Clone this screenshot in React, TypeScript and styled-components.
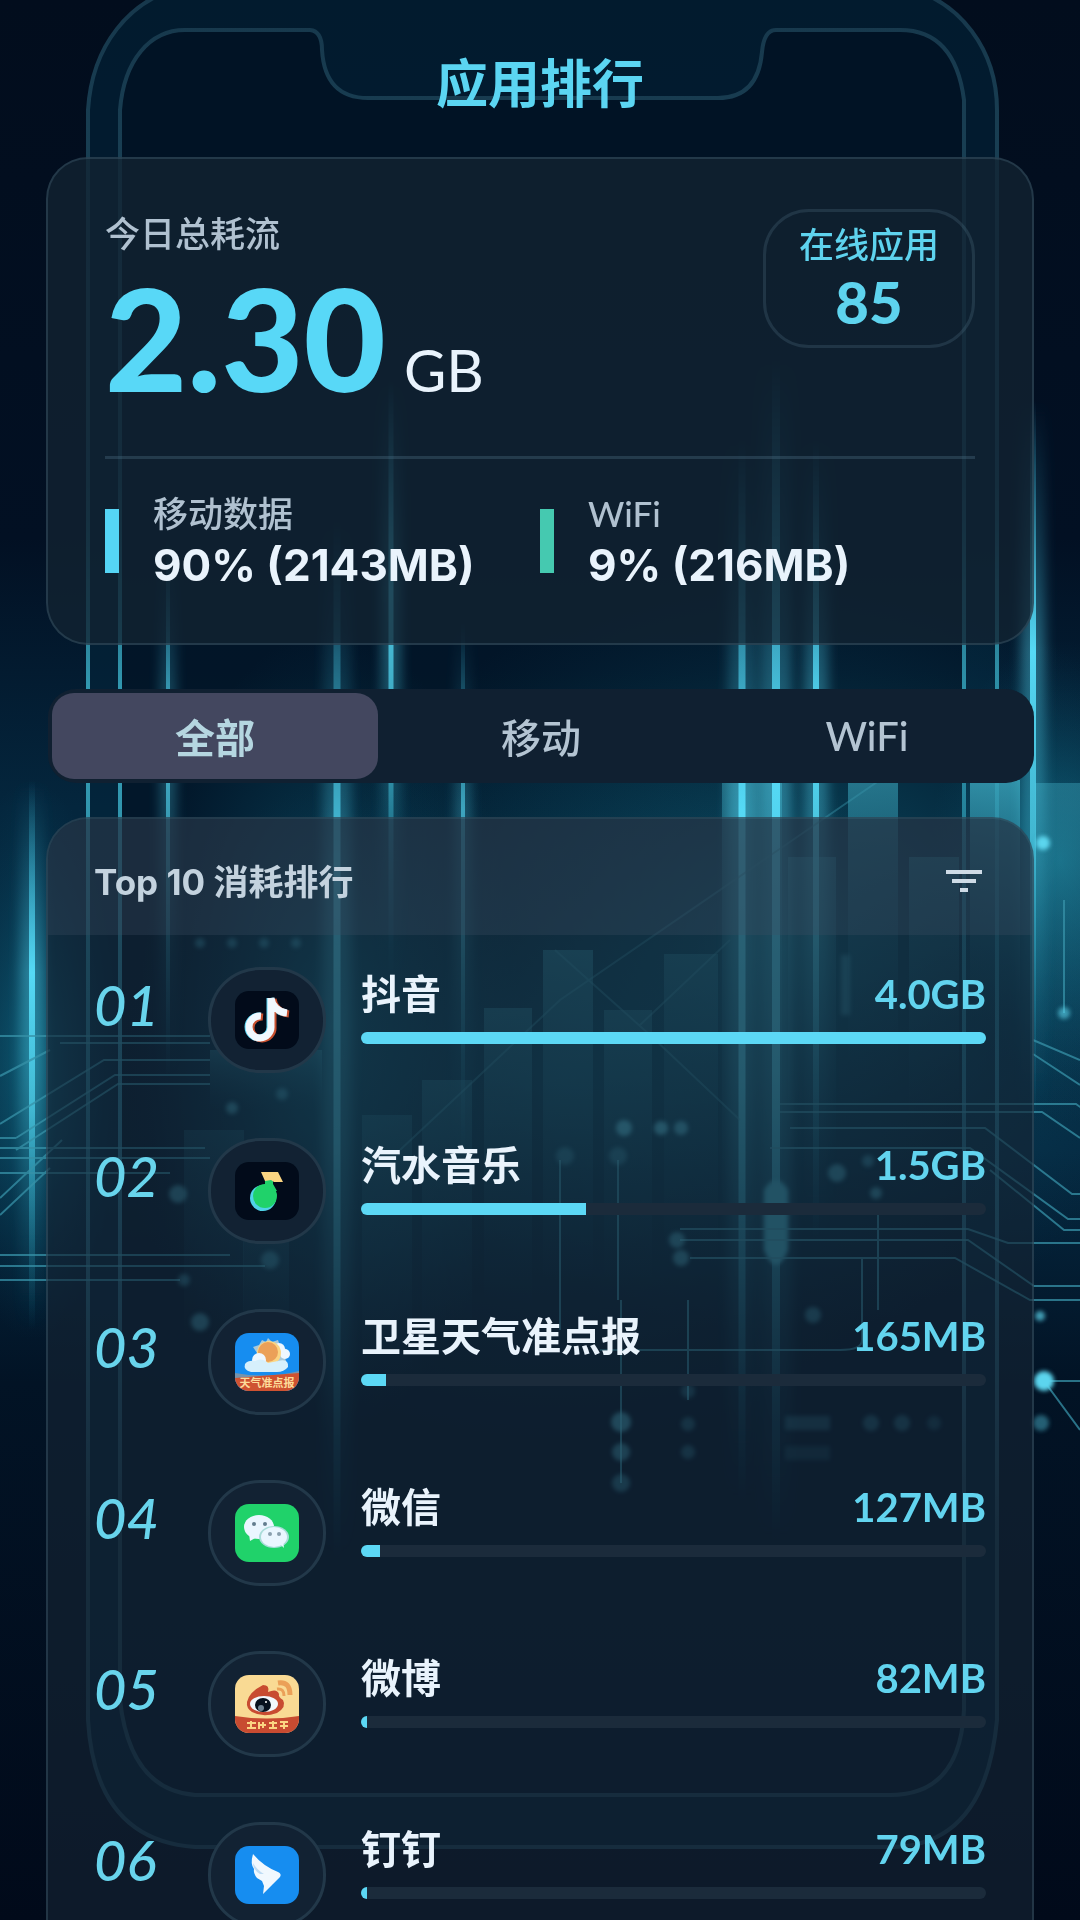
import { ReactNode } from "react";
import styled, { createGlobalStyle } from "styled-components";

const GlobalStyle = createGlobalStyle`
  * {
    box-sizing: border-box;
  }
  body {
    margin: 0;
    background: #020b1a;
    color: #e9f3fc;
    font-family: Lato, "Noto Sans CJK SC", sans-serif;
  }
  h1, h2, p, ol {
    margin: 0;
    padding: 0;
  }
`;

const Page = styled.div`
  position: relative;
  height: 100vh;
  overflow: hidden;
`;

const Scene = styled.svg`
  position: absolute;
  inset: 0;
  width: 100%;
  height: 100%;
`;

const Content = styled.main`
  position: relative;
  padding: 0 46px;
`;

const Title = styled.h1`
  padding: 47px 0 38px;
  font-size: 52px;
  line-height: 72px;
  font-weight: 700;
  text-align: center;
  color: #5bd5f2;
`;

const Card = styled.section`
  border: 2px solid rgba(90, 125, 145, 0.28);
  border-radius: 42px;
  background: rgba(18, 35, 50, 0.76);
`;

const Summary = styled(Card)`
  padding: 50px 57px;
`;

const Total = styled.div`
  display: flex;
  justify-content: space-between;
  align-items: flex-start;
`;

const Label = styled.p`
  font-size: 35px;
  line-height: 48px;
  font-weight: 500;
  color: #b0c1d0;
`;

const Amount = styled.p`
  display: flex;
  align-items: baseline;
  gap: 18px;
  margin-top: 20px;
  font-size: 142px;
  line-height: 120px;
  font-weight: 900;
  color: #58d8f7;
`;

const Unit = styled.span`
  font-size: 58px;
  line-height: 60px;
  font-weight: 400;
  color: #e9f3fc;
`;

const OnlineBadge = styled.div`
  min-width: 212px;
  padding: 8px 30px 13px;
  border: 3px solid rgba(90, 125, 145, 0.24);
  border-radius: 46px;
  text-align: center;
  color: #5ed3ee;
`;

const BadgeLabel = styled.p`
  font-size: 35px;
  line-height: 48px;
  font-weight: 500;
`;

const BadgeValue = styled.p`
  margin-top: 4px;
  font-size: 58px;
  line-height: 60px;
  font-weight: 900;
`;

const Stats = styled.div`
  display: grid;
  grid-template-columns: 1fr 1fr;
  margin-top: 56px;
  padding-top: 30px;
  border-top: 3px solid rgba(90, 125, 145, 0.3);
`;

const Stat = styled.div<{ $color: string }>`
  display: flex;
  align-items: center;
  gap: 34px;
  &::before {
    content: "";
    width: 14px;
    height: 64px;
    background: ${(p) => p.$color};
  }
`;

const StatValue = styled.p`
  font-family: Inter, sans-serif;
  font-size: 44px;
  line-height: 56px;
  font-weight: 700;
  white-space: nowrap;
`;

const Tabs = styled.div`
  display: grid;
  grid-template-columns: repeat(3, 1fr);
  margin: 44px 0 34px 2px;
  padding: 4px;
  border-radius: 28px;
  background: #102031;
`;

const Tab = styled.button<{ $active?: boolean }>`
  height: 86px;
  padding: 0;
  border: 0;
  border-radius: 22px;
  background: ${(p) => (p.$active ? "#43475f" : "transparent")};
  color: ${(p) => (p.$active ? "#b5d6e0" : "#b4c4d2")};
  font-family: inherit;
  font-size: 40px;
  font-weight: ${(p) => (p.$active ? 700 : 500)};
`;

const Ranking = styled(Card)`
  overflow: hidden;
  background: rgba(20, 36, 52, 0.64);
`;

const RankingHeader = styled.header`
  display: flex;
  align-items: center;
  justify-content: space-between;
  height: 116px;
  padding: 10px 48px 0 46px;
  background: rgba(60, 75, 95, 0.3);
`;

const RankingTitle = styled.h2`
  font-family: Inter, "Noto Sans CJK SC", sans-serif;
  font-size: 35px;
  line-height: 48px;
  font-weight: 700;
  color: #c3d2de;
`;

const FilterButton = styled.button`
  display: flex;
  padding: 0;
  border: 0;
  background: none;
`;

const List = styled.ol`
  list-style: none;
`;

const Row = styled.li`
  display: grid;
  grid-template-columns: 114px 118px 1fr;
  height: 171px;
  padding: 32px 46px 0;
`;

const Rank = styled.span`
  padding-top: 8px;
  font-size: 56px;
  line-height: 60px;
  font-style: italic;
  font-weight: 500;
  color: #68d4ec;
`;

const IconShell = styled.span`
  display: flex;
  align-items: center;
  justify-content: center;
  height: 106px;
  border: 3px solid rgba(80, 120, 140, 0.26);
  border-radius: 52px;
  background: #122233;
`;

const Usage = styled.div`
  padding-left: 35px;
`;

const UsageText = styled.div`
  display: flex;
  justify-content: space-between;
  font-size: 40px;
  line-height: 54px;
  font-weight: 700;
`;

const Size = styled.span`
  color: #62d4ef;
`;

const Track = styled.div`
  height: 12px;
  margin-top: 11px;
  border-radius: 6px;
  overflow: hidden;
  background: #1b2b3b;
`;

const Fill = styled.div`
  height: 100%;
  background: #5cd8f5;
`;

function AppIcon({ bg, children }: { bg: string; children: ReactNode }) {
  return (
    <svg width="64" height="58" viewBox="0 0 64 58" aria-hidden="true">
      <clipPath id="icon-clip">
        <rect width="64" height="58" rx="14" />
      </clipPath>
      <g clipPath="url(#icon-clip)">
        <rect width="64" height="58" fill={bg} />
        {children}
      </g>
    </svg>
  );
}

const note = "M36 7V35A11 11 0 1 1 26 25M36 7C37 15 43 21 52 22";

const apps = [
  {
    name: "抖音",
    size: "4.0GB",
    percent: 100,
    icon: (
      <AppIcon bg="#020b1a">
        <g fill="none" strokeWidth="7">
          <path d={note} stroke="#58d8f7" transform="translate(-1 0)" />
          <path d={note} stroke="#c8502f" transform="translate(2 1)" />
          <path d={note} stroke="#f1f8fe" />
        </g>
      </AppIcon>
    ),
  },
  {
    name: "汽水音乐",
    size: "1.5GB",
    percent: 36,
    icon: (
      <AppIcon bg="#020b1a">
        <circle cx="28" cy="36" r="13" fill="#4fd3e8" />
        <circle cx="30" cy="34" r="12" fill="#20d26a" />
        <path d="M30 15H38V22L42 29H24L30 22Z" fill="#20d26a" />
        <path d="M26 10H43L48 20H39L36 18L30 19Z" fill="#fbd582" />
      </AppIcon>
    ),
  },
  {
    name: "卫星天气准点报",
    size: "165MB",
    percent: 4,
    icon: (
      <AppIcon bg="#168df0">
        <path
          d="M33 5L37 9L43 7L45 13L51 16L49 22L51 28H20L22 20L18 14L24 12L27 7L31 9Z"
          fill="#a9c8d8"
        />
        <circle cx="44" cy="16" r="6" fill="#eef7ff" />
        <circle cx="50" cy="21" r="5" fill="#eef7ff" />
        <circle cx="34" cy="20" r="12" fill="#fbd582" />
        <circle cx="33" cy="19" r="10" fill="#eba058" />
        <circle cx="24" cy="27" r="7" fill="#eef7ff" />
        <path
          d="M16 39Q8 37 10 31Q13 27 20 28Q27 24 33 30L43 28Q54 25 53 34Q49 39 42 39Z"
          fill="#d6f0fc"
        />
        <path d="M0 40Q32 46 64 38V58H0Z" fill="#7893aa" />
        <path d="M0 45L64 40V58H0Z" fill="#cf5231" />
        <text
          x="32"
          y="54"
          textAnchor="middle"
          fontSize="11"
          fontWeight="700"
          fill="#fddc9a"
        >
          天气准点报
        </text>
      </AppIcon>
    ),
  },
  {
    name: "微信",
    size: "127MB",
    percent: 3,
    icon: (
      <AppIcon bg="#20d26a">
        <path d="M14 30L15 37L22 33Z" fill="#eaf6ff" />
        <ellipse cx="24" cy="23" rx="15" ry="12" fill="#eaf6ff" />
        <circle cx="19" cy="20" r="2" fill="#627d8e" />
        <circle cx="30" cy="20" r="2" fill="#627d8e" />
        <ellipse cx="39" cy="33" rx="15" ry="11" fill="#a9dcd9" />
        <ellipse cx="39" cy="33" rx="13" ry="10" fill="#eaf6ff" />
        <path d="M45 40L49 44L48 37Z" fill="#eaf6ff" />
        <circle cx="35" cy="30" r="2" fill="#8a9fae" />
        <circle cx="44" cy="30" r="2" fill="#8a9fae" />
      </AppIcon>
    ),
  },
  {
    name: "微博",
    size: "82MB",
    percent: 1,
    icon: (
      <AppIcon bg="#f9da94">
        <path d="M43 8Q55 6 55 20" fill="none" stroke="#eba058" strokeWidth="5" />
        <path d="M42 14Q49 13 49 21" fill="none" stroke="#eba058" strokeWidth="3" />
        <path
          d="M12 27Q14 17 28 10Q35 10 33 17Q42 13 44 19Q43 22 48 25Q52 32 42 38Q28 43 17 37Q11 33 12 27Z"
          fill="#c84b31"
        />
        <ellipse cx="29" cy="29" rx="14" ry="8" fill="#f1f8fe" />
        <ellipse cx="28" cy="30" rx="8" ry="7" fill="#07111e" />
        <circle cx="26" cy="33" r="3" fill="#6f8292" />
        <circle cx="31" cy="27" r="1" fill="#ffffff" />
        <path d="M0 41Q32 46 64 41V58H0Z" fill="#c84b31" />
        <path
          d="M12 48H21M16 46V54M12 53H21M24 47V54M24 50H31M28 47V53M34 48H42M38 46V54M34 53H42M45 47H53M49 47V54M45 51H53"
          stroke="#fbd582"
          strokeWidth="2"
        />
      </AppIcon>
    ),
  },
  {
    name: "钉钉",
    size: "79MB",
    percent: 1,
    icon: (
      <AppIcon bg="#168df0">
        <path
          d="M18 8Q28 20 43 26Q47 28 45 31L38 38L28 48L29 40L27 35L22 32Q18 27 19 23Q15 18 18 8Z"
          fill="#f1f8fe"
        />
        <path d="M18 17Q22 24 29 28L25 28Q18 24 18 17Z" fill="#bfdcf4" />
      </AppIcon>
    ),
  },
];

// x, top, bottom, stroke width, opacity
const beams = [
  [32, 780, 1330, 6, 1],
  [168, 540, 1080, 4, 0.8],
  [337, 520, 1560, 7, 0.9],
  [391, 380, 980, 5, 0.9],
  [463, 620, 1160, 4, 0.7],
  [742, 440, 1500, 7, 1],
  [776, 360, 1540, 8, 1],
  [816, 440, 1240, 6, 1],
  [1033, 400, 1120, 6, 1],
];

// x, y, width, height, opacity
const bars = [
  [210, 1050, 112, 60, 0.4],
  [184, 1130, 60, 220, 0.2],
  [243, 1220, 46, 160, 0.2],
  [362, 1115, 50, 260, 0.25],
  [422, 1080, 50, 260, 0.3],
  [484, 1008, 48, 300, 0.4],
  [543, 950, 50, 330, 0.5],
  [604, 1010, 48, 270, 0.35],
  [664, 954, 54, 310, 0.35],
  [722, 780, 60, 430, 0.45],
  [788, 857, 48, 300, 0.4],
  [848, 780, 50, 290, 0.6],
  [909, 857, 50, 260, 0.4],
  [970, 780, 50, 240, 0.8],
  [1035, 783, 60, 340, 0.45],
];

// x, y, radius, opacity
const dots = [
  [1043, 843, 7, 1],
  [1064, 1013, 6, 0.6],
  [1044, 1381, 10, 1],
  [1040, 1316, 5, 0.7],
  [1041, 1423, 8, 0.4],
  [200, 943, 5, 0.4],
  [232, 943, 5, 0.4],
  [264, 943, 5, 0.4],
  [296, 943, 5, 0.4],
  [178, 1194, 9, 0.5],
  [232, 1108, 6, 0.5],
  [282, 1094, 6, 0.4],
  [270, 1260, 9, 0.4],
  [184, 1280, 6, 0.4],
  [200, 1322, 9, 0.5],
  [624, 1128, 8, 0.7],
  [661, 1128, 7, 0.7],
  [681, 1128, 7, 0.6],
  [565, 1156, 9, 0.3],
  [618, 1156, 9, 0.3],
  [837, 1173, 9, 0.5],
  [868, 1161, 6, 0.4],
  [876, 1193, 6, 0.5],
  [677, 1240, 8, 0.5],
  [681, 1258, 8, 0.5],
  [813, 1315, 8, 0.4],
  [621, 1422, 10, 0.6],
  [621, 1452, 9, 0.5],
  [621, 1483, 9, 0.4],
  [688, 1391, 7, 0.3],
  [688, 1424, 7, 0.3],
  [688, 1452, 7, 0.3],
  [871, 1423, 8, 0.3],
  [902, 1423, 8, 0.3],
  [934, 1423, 7, 0.2],
];

function Background() {
  return (
    <Scene viewBox="0 0 1080 1920" preserveAspectRatio="none" aria-hidden="true">
      <defs>
        <linearGradient id="base" x1="0" y1="0" x2="0" y2="1">
          <stop offset="0" stopColor="#020d1d" />
          <stop offset="0.28" stopColor="#021023" />
          <stop offset="0.42" stopColor="#04263d" />
          <stop offset="0.6" stopColor="#052840" />
          <stop offset="0.72" stopColor="#021325" />
          <stop offset="1" stopColor="#010a1a" />
        </linearGradient>
        <radialGradient id="glow">
          <stop offset="0" stopColor="#158099" stopOpacity="0.6" />
          <stop offset="1" stopColor="#0b5069" stopOpacity="0" />
        </radialGradient>
        <linearGradient id="beam" x1="0" y1="0" x2="0" y2="1">
          <stop offset="0" stopColor="#3bbfe0" stopOpacity="0" />
          <stop offset="0.35" stopColor="#55d9f5" />
          <stop offset="0.6" stopColor="#4ac8e2" stopOpacity="0.8" />
          <stop offset="1" stopColor="#1c8ba8" stopOpacity="0" />
        </linearGradient>
        <linearGradient id="bar" x1="0" y1="0" x2="0" y2="1">
          <stop offset="0" stopColor="#3aa3ba" />
          <stop offset="1" stopColor="#14617c" stopOpacity="0" />
        </linearGradient>
        <linearGradient id="frame" gradientUnits="userSpaceOnUse" x1="0" y1="0" x2="0" y2="1920">
          <stop offset="0" stopColor="#17384c" />
          <stop offset="0.25" stopColor="#1b4b60" />
          <stop offset="0.37" stopColor="#34a0b8" />
          <stop offset="0.6" stopColor="#28708a" />
          <stop offset="0.8" stopColor="#1b3a4c" />
          <stop offset="1" stopColor="#1b3c50" />
        </linearGradient>
        <filter id="soft" x="-50%" y="-50%" width="200%" height="200%">
          <feGaussianBlur stdDeviation="2" />
        </filter>
        <filter id="halo" x="-100%" y="0" width="300%" height="100%">
          <feGaussianBlur stdDeviation="6 0" />
        </filter>
      </defs>

      <rect width="1080" height="1920" fill="url(#base)" />
      <path
        d="M88 110C92 45 130 0 180 -12H905C960 0 997 50 997 110V1720Q985 1847 890 1847H195Q95 1840 88 1720Z"
        fill="#04243a"
        fillOpacity="0.6"
        stroke="url(#frame)"
        strokeWidth="4"
      />
      <path
        d="M120 110C124 60 150 30 185 30H310Q322 31 322 50Q325 98 368 98H718Q758 98 762 52Q764 30 776 30H900Q955 30 964 100V1710Q960 1795 890 1795H195Q130 1790 120 1700Z"
        fill="#020f20"
        fillOpacity="0.6"
        stroke="url(#frame)"
        strokeWidth="4"
      />
      <ellipse cx="780" cy="950" rx="460" ry="380" fill="url(#glow)" />
      <ellipse cx="1060" cy="860" rx="130" ry="220" fill="url(#glow)" />
      <ellipse cx="32" cy="1060" rx="90" ry="280" fill="url(#glow)" />
      <ellipse cx="330" cy="1030" rx="190" ry="400" fill="url(#glow)" />
      <ellipse cx="560" cy="1080" rx="460" ry="360" fill="url(#glow)" opacity="0.6" />

      {bars.map(([x, y, w, h, o]) => (
        <rect key={`${x}-${y}`} x={x} y={y} width={w} height={h} opacity={o} fill="url(#bar)" />
      ))}

      {beams.map(([x, top, bottom, w, o]) => (
        <g key={x} opacity={o} fill="url(#beam)">
          <rect
            x={x - w * 2}
            y={top}
            width={w * 4}
            height={bottom - top}
            opacity="0.4"
            filter="url(#halo)"
          />
          <rect x={x - w / 2} y={top} width={w} height={bottom - top} />
        </g>
      ))}
      <path d="M764 1190Q776 1170 788 1190V1250Q776 1280 764 1250Z" fill="#3aa3ba" filter="url(#soft)" />

      <g fill="none" stroke="#3792a8" strokeWidth="2" opacity="0.75">
        <path d="M880 780L560 1000L400 1150M555 950L650 1035L740 1120M730 940L640 1025" opacity="0.6" />
        <path d="M780 1104H1076L1090 1114M780 1112H1042L1080 1138M790 1128H985L1072 1194H1080" />
        <path d="M770 1148H970L1068 1219H1080M990 1170L1064 1230H1080" />
        <path d="M680 1229H968L1008 1243H1080M680 1240H968L1034 1286H1080M690 1258H955L1030 1300H1080" />
        <path d="M862 1258V1340Q862 1350 840 1350H600M878 1215V1310M1064 1013V900M1044 1381H1080M1044 1381L1080 1430" />
        <path d="M1033 1040L1080 1060M1033 1054L1080 1085" />
        <path d="M0 1036H210M60 1043H210M0 1076L50 1050M0 1124L104 1060H210M16 1138L115 1075H210M16 1150L118 1084H210" />
        <path d="M0 1138H16M0 1148H205M0 1158H210M0 1173H170M0 1198L62 1140M0 1215L50 1168" />
        <path d="M0 1255H230M0 1266H265M0 1280H180" />
        <path d="M621 1300V1483M688 1300V1400M560 1160V1330M618 1160V1300" />
      </g>

      <g fill="#5bd5ee" filter="url(#soft)">
        {dots.map(([x, y, r, o]) => (
          <circle key={`${x}-${y}`} cx={x} cy={y} r={r} opacity={o} />
        ))}
        <rect x="785" y="1416" width="45" height="14" opacity="0.25" />
        <rect x="785" y="1446" width="45" height="14" opacity="0.15" />
        <rect x="841" y="955" width="9" height="60" opacity="0.3" />
      </g>
    </Scene>
  );
}

export default function App() {
  return (
    <Page>
      <GlobalStyle />
      <Background />
      <Content>
        <Title>应用排行</Title>

        <Summary>
          <Total>
            <div>
              <Label>今日总耗流</Label>
              <Amount>
                2.30 <Unit>GB</Unit>
              </Amount>
            </div>
            <OnlineBadge>
              <BadgeLabel>在线应用</BadgeLabel>
              <BadgeValue>85</BadgeValue>
            </OnlineBadge>
          </Total>
          <Stats>
            <Stat $color="#55d5f5">
              <div>
                <Label>移动数据</Label>
                <StatValue>90% (2143MB)</StatValue>
              </div>
            </Stat>
            <Stat $color="#45c9b0">
              <div>
                <Label>WiFi</Label>
                <StatValue>9% (216MB)</StatValue>
              </div>
            </Stat>
          </Stats>
        </Summary>

        <Tabs role="tablist">
          <Tab role="tab" aria-selected="true" $active>
            全部
          </Tab>
          <Tab role="tab" aria-selected="false">
            移动
          </Tab>
          <Tab role="tab" aria-selected="false">
            WiFi
          </Tab>
        </Tabs>

        <Ranking>
          <RankingHeader>
            <RankingTitle>Top 10 消耗排行</RankingTitle>
            <FilterButton aria-label="筛选">
              <svg width="40" height="26" viewBox="0 0 40 26">
                <path
                  d="M2 3H38M8 12H32M16 21H24"
                  stroke="#cfdbe6"
                  strokeWidth="4"
                />
              </svg>
            </FilterButton>
          </RankingHeader>
          <List>
            {apps.map((app, i) => (
              <Row key={app.name}>
                <Rank>{String(i + 1).padStart(2, "0")}</Rank>
                <IconShell>{app.icon}</IconShell>
                <Usage>
                  <UsageText>
                    <span>{app.name}</span>
                    <Size>{app.size}</Size>
                  </UsageText>
                  <Track>
                    <Fill style={{ width: `${app.percent}%` }} />
                  </Track>
                </Usage>
              </Row>
            ))}
          </List>
        </Ranking>
      </Content>
    </Page>
  );
}
